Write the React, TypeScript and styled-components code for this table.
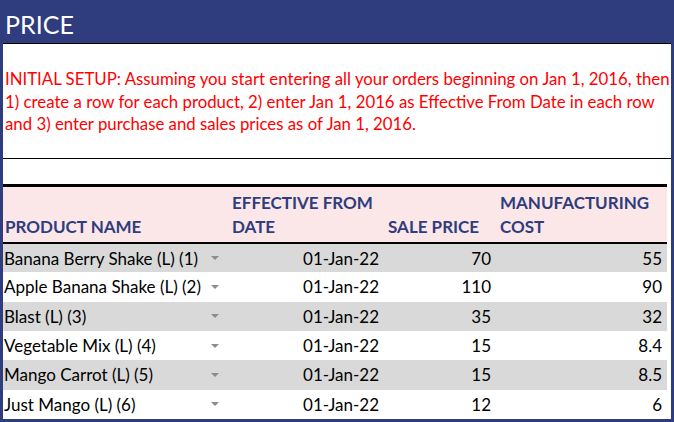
import React from 'react'
import styled, { createGlobalStyle } from 'styled-components'

const GlobalStyle = createGlobalStyle`
  html, body {
    margin: 0;
    padding: 0;
    background: #2f3c7d;
  }
  body {
    font-family: Lato, "Liberation Sans", sans-serif;
  }
`

interface Product {
  name: string
  date: string
  sale: string
  cost: string
}

const products: Product[] = [
  { name: 'Banana Berry Shake (L) (1)', date: '01-Jan-22', sale: '70', cost: '55' },
  { name: 'Apple Banana Shake (L) (2)', date: '01-Jan-22', sale: '110', cost: '90' },
  { name: 'Blast (L) (3)', date: '01-Jan-22', sale: '35', cost: '32' },
  { name: 'Vegetable Mix (L) (4)', date: '01-Jan-22', sale: '15', cost: '8.4' },
  { name: 'Mango Carrot (L) (5)', date: '01-Jan-22', sale: '15', cost: '8.5' },
  { name: 'Just Mango (L) (6)', date: '01-Jan-22', sale: '12', cost: '6' },
]

const App = () => {
  return (
    <>
      <GlobalStyle />
      <Frame>
        <TitleBar>PRICE</TitleBar>
        <Sheet>
          <Note>
            INITIAL SETUP: Assuming you start entering all your orders beginning on Jan 1, 2016, then<br />
            1) create a row for each product, 2) enter Jan 1, 2016 as Effective From Date in each row<br />
            and 3) enter purchase and sales prices as of Jan 1, 2016.
          </Note>
          <Spacer />
          <PriceTable>
            <colgroup>
              <col style={{ width: 225 }} />
              <col style={{ width: 156 }} />
              <col style={{ width: 112 }} />
              <col style={{ width: 171 }} />
            </colgroup>
            <thead>
              <tr>
                <HeadCell>PRODUCT NAME</HeadCell>
                <HeadCell>EFFECTIVE FROM<br />DATE</HeadCell>
                <HeadCell>SALE PRICE</HeadCell>
                <HeadCell>MANUFACTURING<br />COST</HeadCell>
              </tr>
            </thead>
            <tbody>
              {products.map((p, i) => (
                <Row key={p.name} $shaded={i % 2 === 0}>
                  <Cell>
                    <NameWrap>
                      <span>{p.name}</span>
                      <DropArrow />
                    </NameWrap>
                  </Cell>
                  <Cell $align="right">{p.date}</Cell>
                  <Cell $align="right">{p.sale}</Cell>
                  <Cell $align="right">{p.cost}</Cell>
                </Row>
              ))}
            </tbody>
          </PriceTable>
        </Sheet>
      </Frame>
    </>
  )
}

const Frame = styled.div`
  width: 674px;
  height: 422px;
  box-sizing: border-box;
  padding: 0 3px 3px 3px;
  background: #2f3c7d;
  display: flex;
  flex-direction: column;
  overflow: hidden;
`

const TitleBar = styled.div`
  height: 43px;
  padding-left: 2px;
  color: #ffffff;
  font-size: 25px;
  line-height: 48px;
  flex-shrink: 0;
`

const Sheet = styled.div`
  flex: 1;
  background: #ffffff;
  border-top: 1px solid #000000;
`

const Note = styled.div`
  height: 115px;
  box-sizing: border-box;
  padding: 24px 2px 0 2px;
  border-bottom: 1px solid #000000;
  color: #ff0000;
  font-size: 16.8px;
  line-height: 22.5px;
  white-space: nowrap;
`

const Spacer = styled.div`
  height: 25px;
`

const PriceTable = styled.table`
  width: 664px;
  border-collapse: collapse;
  table-layout: fixed;
  font-size: 17px;
  color: #000000;
`

const HeadCell = styled.th`
  height: 52px;
  padding: 0 2px 3px 4px;
  text-align: left;
  vertical-align: bottom;
  background: #fbe7e8;
  color: #2f3c7d;
  font-weight: 700;
  line-height: 24px;
  white-space: nowrap;
  border-top: 3px solid #000000;
  border-bottom: 2px solid #000000;

  &:first-child {
    padding-left: 2px;
  }
`

const Row = styled.tr<{ $shaded: boolean }>`
  height: 29.33px;
  background: ${({ $shaded }) => ($shaded ? '#d9d9d9' : '#ffffff')};
`

const Cell = styled.td<{ $align?: 'left' | 'right' }>`
  padding: 0 5px 0 1px;
  text-align: ${({ $align }) => $align ?? 'left'};
  white-space: nowrap;
`

const NameWrap = styled.div`
  display: flex;
  align-items: center;
  justify-content: space-between;
  padding-right: 4px;
`

const DropArrow = styled.span`
  width: 0;
  height: 0;
  border-left: 4px solid transparent;
  border-right: 4px solid transparent;
  border-top: 4px solid #8c8c8c;
`

export default App
